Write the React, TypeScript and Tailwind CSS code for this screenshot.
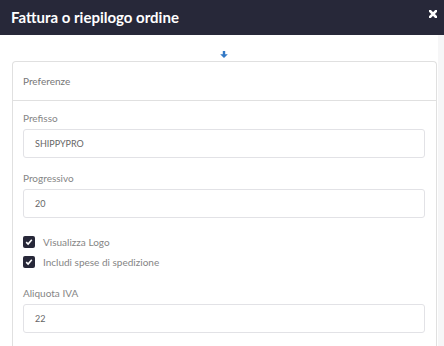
import React from 'react';

const font = { fontFamily: 'Lato, "Open Sans", sans-serif' };

function Field({ label, value, className = '' }: { label: string; value: string; className?: string }) {
  return (
    <div className={className}>
      <div className="h-[14px] text-[10px] leading-[14px] text-[#858585]">{label}</div>
      <div className="mt-[4px] h-[29px] rounded-[3px] border border-[#e2e2e6] px-[11px] flex items-center text-[9px] text-[#666]">
        {value}
      </div>
    </div>
  );
}

function Check({ label, className = '' }: { label: string; className?: string }) {
  return (
    <label className={`flex h-[16px] items-center gap-[8px] ${className}`}>
      <span className="flex h-[12px] w-[12px] items-center justify-center rounded-[2px] bg-[#272839]">
        <svg width="8" height="8" viewBox="0 0 8 8">
          <path d="M1.2 4.2 L3.1 6 L6.8 1.8" fill="none" stroke="white" strokeWidth="1.6" />
        </svg>
      </span>
      <span className="text-[10px] text-[#858585]">{label}</span>
    </label>
  );
}

export default function App() {
  return (
    <div className="h-[346px] w-[444px] overflow-hidden bg-white" style={font}>
      <div className="flex h-[35px] items-center justify-between bg-[#272839] pl-[11px] pr-[7px]">
        <h1 className="text-[15px] font-bold text-white">Fattura o riepilogo ordine</h1>
        <svg width="8" height="8" viewBox="0 0 8 8" className="mb-[7px]">
          <path d="M1 1 L7 7 M7 1 L1 7" stroke="white" strokeWidth="2.6" strokeLinecap="square" />
        </svg>
      </div>

      <div className="flex h-[311px]">
        <div className="flex-1">
          <div className="flex h-[26px] items-end justify-center pb-[3px] pl-[10px]">
            <svg width="8" height="7" viewBox="0 0 8 7">
              <path d="M2.8 0 H5.2 V3.2 H7.8 L4 7 L0.2 3.2 H2.8 Z" fill="#3479c6" />
            </svg>
          </div>
          <div className="ml-[12px] mr-[1px] rounded-t-[4px] border border-b-0 border-[#e0e0e0] h-[300px]">
            <div className="flex h-[39px] items-center border-b border-[#e0e0e0] px-[10px] text-[10px] text-[#777]">
              Preferenze
            </div>
            <div className="pl-[10px] pr-[11px] pt-[10px]">
              <Field label="Prefisso" value="SHIPPYPRO" />
              <Field label="Progressivo" value="20" className="mt-[13px]" />
              <Check label="Visualizza Logo" className="mt-[16px]" />
              <Check label="Includi spese di spedizione" className="mt-[4px]" />
              <Field label="Aliquota IVA" value="22" className="mt-[16px]" />
            </div>
          </div>
        </div>
        <div className="w-[6px] bg-[#f6f6f7]" />
      </div>
    </div>
  );
}
